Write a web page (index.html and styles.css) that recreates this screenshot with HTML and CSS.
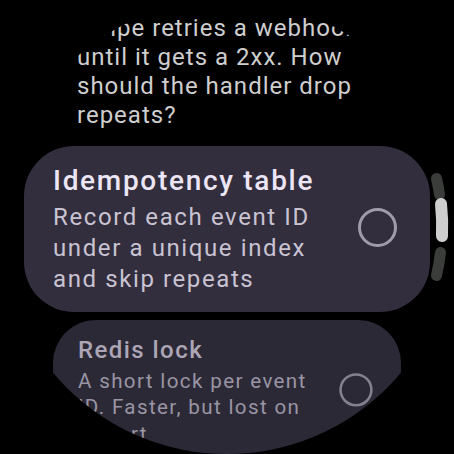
FILE: index.html
```html
<!DOCTYPE html>
<html lang="en">
<head>
<meta charset="utf-8">
<title>Webhook quiz</title>
<link rel="stylesheet" href="styles.css">
</head>
<body>
<div class="screen">
  <div class="list">
    <p class="question">Stripe retries a webhook until it gets a 2xx. How should the handler drop repeats?</p>
    <div class="card">
      <div class="card-text">
        <div class="card-title">Idempotency table</div>
        <div class="card-body">Record each event ID under a unique index and skip repeats</div>
      </div>
      <span class="radio"></span>
    </div>
    <div class="card card-far">
      <div class="card-text">
        <div class="card-title">Redis lock</div>
        <div class="card-body">A short lock per event ID. Faster, but lost on restart</div>
      </div>
      <span class="radio"></span>
    </div>
  </div>
  <svg class="scrollbar" width="454" height="454" viewBox="0 0 454 454">
    <path class="track" d="M436.5 178.5 A215 215 0 0 1 439.5 194.5"/>
    <path class="thumb" d="M441 204 A215 215 0 0 1 442 236"/>
    <path class="track" d="M440.5 252.5 A215 215 0 0 1 436.5 275.5"/>
  </svg>
</div>
</body>
</html>
```
FILE: styles.css
```css
html, body {
  margin: 0;
  padding: 0;
  background: #000;
}
.screen {
  position: relative;
  width: 454px;
  height: 454px;
  overflow: hidden;
  background: #000;
  clip-path: circle(227px at 227px 227px);
  font-family: Roboto, "Noto Sans", sans-serif;
}
.list {
  padding-top: 14px;
  display: flex;
  flex-direction: column;
}
.question {
  margin: 0;
  padding: 0 82px 0 77px;
  font-size: 24px;
  line-height: 29px;
  letter-spacing: 1px;
  color: #cecece;
  clip-path: circle(215px at 223px 190.5px);
}
.card {
  box-sizing: border-box;
  width: 406px;
  margin: 16px 24px 0;
  display: flex;
  align-items: center;
  gap: 22px;
  padding: 19px 33px 17px 29px;
  border-radius: 50px;
  background: #322e3d;
}
.card-text {
  flex: 1;
  min-width: 0;
}
.card-title {
  font-size: 28px;
  line-height: 32px;
  font-weight: 500;
  letter-spacing: 1.7px;
  color: #ece5f5;
}
.card-body {
  margin-top: 5px;
  font-size: 24px;
  line-height: 31px;
  letter-spacing: 1.6px;
  color: #c9c3d2;
}
.radio {
  flex: none;
  box-sizing: border-box;
  width: 39px;
  height: 39px;
  margin-bottom: 6px;
  border: 3.5px solid #a19aab;
  border-radius: 50%;
}
.card-far {
  margin-top: 8px;
  transform: scale(0.857);
  transform-origin: top center;
  background: #2c2936;
}
.card-far .card-title {
  color: #aca6b6;
}
.card-far .card-body {
  color: #9a95a4;
}
.card-far .radio {
  border-color: #85808f;
}
.scrollbar {
  position: absolute;
  left: 0;
  top: 0;
  fill: none;
  stroke-linecap: round;
  stroke-width: 11;
}
.scrollbar .track {
  stroke: #3a3d3a;
}
.scrollbar .thumb {
  stroke: #cdcdcd;
  stroke-width: 12;
}
```
